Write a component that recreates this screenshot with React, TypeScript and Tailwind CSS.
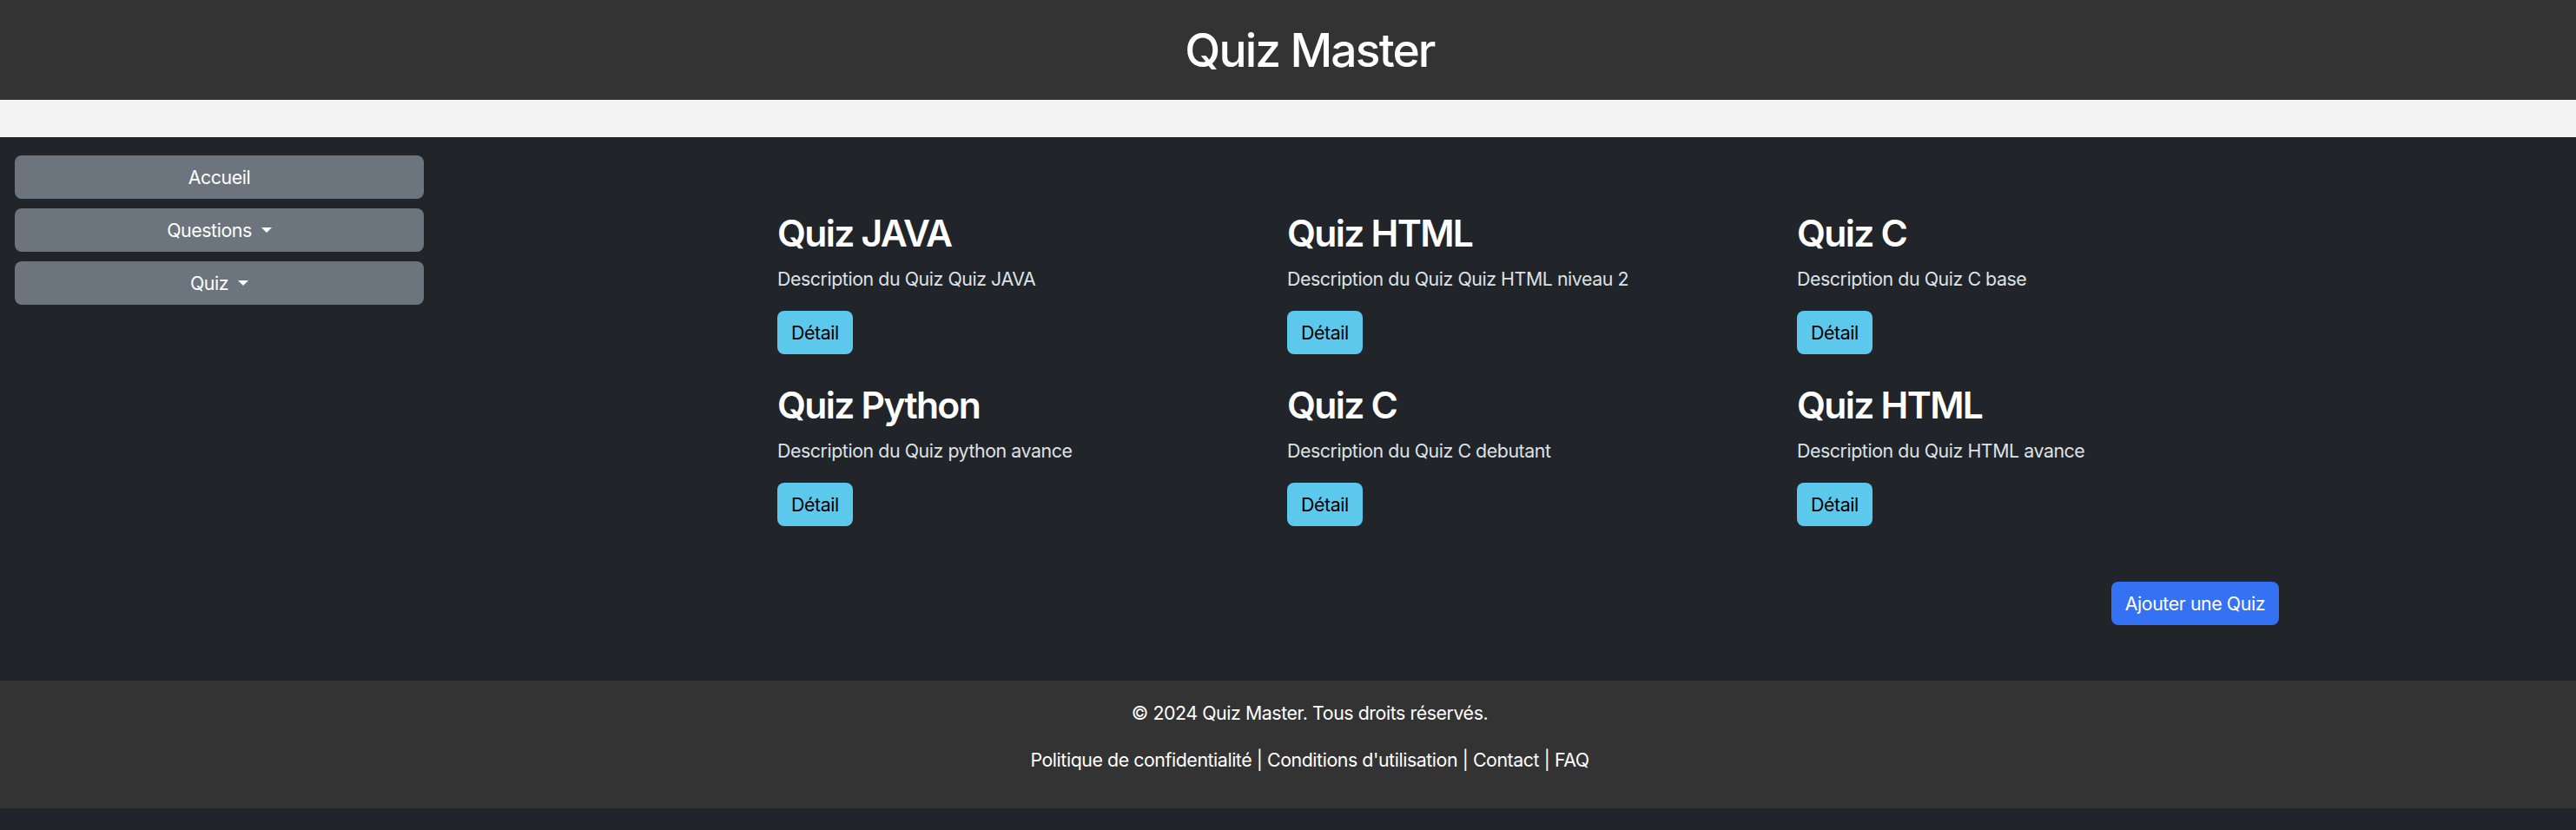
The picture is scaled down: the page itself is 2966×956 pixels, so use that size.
import React from "react";

const quizzes = [
  { title: "Quiz JAVA", desc: "Description du Quiz Quiz JAVA" },
  { title: "Quiz HTML", desc: "Description du Quiz Quiz HTML niveau 2" },
  { title: "Quiz C", desc: "Description du Quiz C base" },
  { title: "Quiz Python", desc: "Description du Quiz python avance" },
  { title: "Quiz C", desc: "Description du Quiz C debutant" },
  { title: "Quiz HTML", desc: "Description du Quiz HTML avance" },
];

const Caret = () => (
  <span className="inline-block ml-[11px] w-0 h-0 border-t-[6px] border-t-white border-x-[6px] border-x-transparent" />
);

const SideButton = ({ label, caret }: { label: string; caret?: boolean }) => (
  <button className="w-full h-[50px] rounded-[8px] bg-[#6c757d] text-white text-[21.33px] leading-[32px] flex items-center justify-center">
    {label}
    {caret && <Caret />}
  </button>
);

const App = () => {
  return (
    <div className="min-h-screen bg-[#212529] text-[#dee2e6] font-['Inter','Liberation_Sans',sans-serif] text-[21.33px] leading-[32px] tracking-[-0.02em]">
      <header className="h-[115px] bg-[#333333] flex items-center justify-center pl-[50px]">
        <h1 className="text-white text-[53.33px] leading-[64px] font-medium tracking-[-0.035em]">Quiz Master</h1>
      </header>
      <div className="h-[43px] bg-[#f3f3f3]" />

      <div className="flex">
        <aside className="w-[505px] shrink-0 pl-[17px] pr-[17px] pt-[21px] flex flex-col gap-[11px]">
          <SideButton label="Accueil" />
          <SideButton label="Questions" caret />
          <SideButton label="Quiz" caret />
        </aside>

        <main className="ml-[374px] w-[1761px] pt-[85px] pb-[64px]">
          <div className="grid grid-cols-3 gap-y-[33px]">
            {quizzes.map((q, i) => (
              <div key={i} className="px-[16px]">
                <h2 className="text-white text-[42.67px] leading-[51.2px] font-semibold tracking-[-0.04em] mb-[10.67px]">{q.title}</h2>
                <p className="mb-[21.33px]">{q.desc}</p>
                <button className="h-[50px] px-[16px] rounded-[8px] bg-[#5bc8ec] text-black">Détail</button>
              </div>
            ))}
          </div>
          <div className="flex justify-end pr-[16px] mt-[64px]">
            <button className="h-[50px] px-[16px] rounded-[8px] bg-[#3571f3] text-white">Ajouter une Quiz</button>
          </div>
        </main>
      </div>

      <footer className="bg-[#333333] text-white text-center pl-[50px] pt-[21px] pb-[19px]">
        <p className="mb-[21.33px]">© 2024 Quiz Master. Tous droits réservés.</p>
        <p className="mb-[21.33px]">Politique de confidentialité | Conditions d'utilisation | Contact | FAQ</p>
      </footer>
    </div>
  );
};

export default App;
